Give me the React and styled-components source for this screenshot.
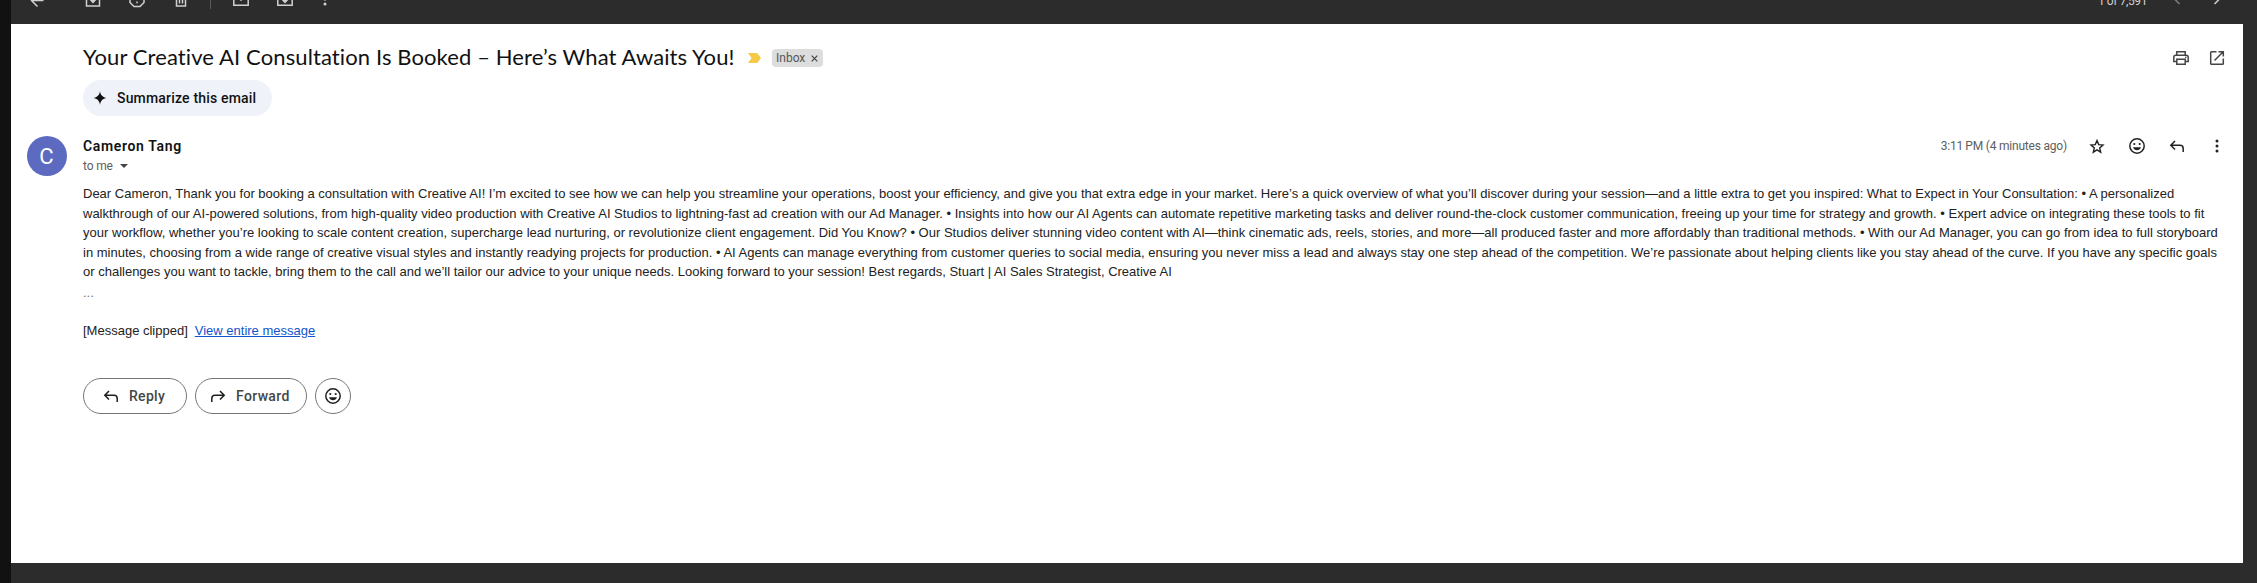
import React from "react";
import styled, { createGlobalStyle } from "styled-components";

const GlobalStyle = createGlobalStyle`
  * { box-sizing: border-box; }
  body { margin: 0; background: #2c2c2c; font-family: "Liberation Sans", Arial, sans-serif; }
`;

const display = `"Lato", "Open Sans", sans-serif`;
const ui = `"Roboto", "Inter", sans-serif`;

const Page = styled.div`
  display: grid;
  grid-template-columns: 11px 1fr;
  width: 2257px;
  height: 583px;
  overflow: hidden;
  background: #2c2c2c;
`;
const Edge = styled.div`
  background: #111;
`;
const Main = styled.main`
  display: flex;
  flex-direction: column;
  padding-right: 14px;
  min-width: 0;
`;
const ToolbarClip = styled.div`
  height: 24px;
  overflow: hidden;
  display: flex;
  flex-direction: column;
  justify-content: flex-end;
`;
const Toolbar = styled.div`
  height: 50px;
  flex: none;
  display: flex;
  align-items: center;
  padding: 0 6px 0 16px;
  color: #d0d0d0;
`;
const ToolSlot = styled.span`
  width: ${(p) => p.$w || 44}px;
  display: flex;
  justify-content: center;
  opacity: ${(p) => (p.$dim ? 0.5 : 1)};
`;
const Divider = styled.i`
  width: 1px;
  height: 20px;
  margin: 0 8px 0 7px;
  background: #5a5a5a;
`;
const Counter = styled.span`
  margin-left: auto;
  margin-right: 10px;
  padding-top: 4px;
  font: 12px ${ui};
  letter-spacing: ${(p) => p.$ls || 0}px;
`;
const Card = styled.article`
  height: 539px;
  background: #fff;
  color: #1f1f1f;
  display: flex;
  flex-direction: column;
`;
const SubjectRow = styled.header`
  display: flex;
  align-items: center;
  height: 36px;
  margin: 16px 8px 0 72px;
`;
const Subject = styled.h1`
  margin: 0;
  padding-bottom: 2px;
  width: 665px;
  font: 400 22px/28px ${display};
  letter-spacing: ${(p) => p.$ls}px;
  white-space: nowrap;
  color: #111;
`;
const Chip = styled.span`
  display: flex;
  align-items: center;
  justify-content: space-between;
  width: 51px;
  height: 18px;
  margin-left: 11px;
  padding: 0 5px 0 4px;
  border-radius: 4px;
  background: #ddd;
  color: #555;
  font: 12px/18px ${ui};
`;
const SubjectActions = styled.div`
  display: flex;
  margin-left: auto;
`;
const Action = styled.span`
  width: ${(p) => p.$w || 40}px;
  display: flex;
  justify-content: center;
  color: ${(p) => p.$c || "#222"};
`;
const Summarize = styled.button`
  display: flex;
  align-items: center;
  gap: 10px;
  width: 189px;
  height: 36px;
  margin: 4px 0 0 72px;
  padding: 0 0 0 10px;
  border: 0;
  border-radius: 18px;
  background: #eff3f9;
  color: #111;
  font: 500 14px ${ui};
  letter-spacing: ${(p) => p.$ls}px;
  white-space: nowrap;
`;
const SenderRow = styled.section`
  display: flex;
  height: 40px;
  margin: 20px 6px 0 16px;
`;
const Avatar = styled.div`
  width: 40px;
  height: 40px;
  border-radius: 50%;
  background: #5c6bc0;
  color: #fff;
  font: 400 22px/41px ${ui};
  text-align: center;
  padding-right: 1px;
`;
const Sender = styled.div`
  margin-left: 16px;
`;
const Name = styled.div`
  font: 600 14px/20px ${ui};
  letter-spacing: ${(p) => p.$ls}px;
  color: #111;
`;
const To = styled.div`
  display: flex;
  align-items: center;
  gap: 7px;
  font: 12px/20px ${ui};
  letter-spacing: ${(p) => p.$ls}px;
  color: #5e5e5e;
`;
const Meta = styled.div`
  display: flex;
  align-items: center;
  height: 20px;
  margin-left: auto;
`;
const Time = styled.span`
  margin-right: 10px;
  font: 12px/20px ${ui};
  letter-spacing: ${(p) => p.$ls}px;
  color: #5e5e5e;
`;
const Body = styled.div`
  margin: 8px 0 0 72px;
  font-size: 13px;
  line-height: 19.5px;
  color: #222;
`;
const Line = styled.span`
  display: block;
  white-space: nowrap;
`;
const Ellipsis = styled.div`
  height: 19px;
  line-height: 21px;
  color: #777;
`;
const Clipped = styled.div`
  margin-top: 20px;
  white-space: pre;
`;
const Link = styled.a`
  margin-left: 7px;
  color: #1155cc;
  text-decoration: underline;
`;
const Replies = styled.footer`
  display: flex;
  gap: 8px;
  margin: 38px 0 0 72px;
`;
const Pill = styled.button`
  display: flex;
  align-items: center;
  justify-content: ${(p) => (p.$round ? "center" : "flex-start")};
  gap: 8px;
  width: ${(p) => p.$w}px;
  height: 36px;
  padding: 0 0 0 ${(p) => p.$pad || 0}px;
  border: 1px solid #747775;
  border-radius: 18px;
  background: #fff;
  color: #1f1f1f;
  font: 500 14px ${ui};
  letter-spacing: ${(p) => p.$ls || 0}px;
`;
const PillLabel = styled.span`
  color: #444746;
`;
const Svg = styled.svg`
  display: block;
  flex: none;
  fill: none;
  stroke: currentColor;
  stroke-width: ${(p) => p.$sw || 1.5};
  .f { fill: currentColor; stroke: none; }
`;
const Icon = ({ children, sw, w = 20 }) => (
  <Svg $sw={sw} width={w} height="20" viewBox={`0 0 ${w} 20`} aria-hidden="true">
    {children}
  </Svg>
);

const Back = () => <Icon><path d="M16.500 11.500H5M10.500 5.500l-6 6 6 6" /></Icon>;
const Archive = () => <Icon><path d="M3.500 6v11h13V6l-1.700-2.500H5.200zM3.500 6.500h13M10 8.500v5" /><path d="M6.800 11 10 14.500 13.200 11z" className="f" /></Icon>;
const Spam = () => <Icon><path d="M7 3h6l4 4v6.500l-4 4H7l-4-4V7zM10 6v5M10 12.500v1.800" /></Icon>;
const Trash = () => <Icon><path d="M5.500 5v12h9V5M4 4.500h12M8.500 7v7.500M11.500 7v7.500" /></Icon>;
const Unread = () => <Icon><path d="M12 4H2.800v12.200h14.400V8M3 6.500l7 4.500 5-3" /></Icon>;
const Move = () => <Icon><path d="M2.800 4h5l2 2h7.400v10.200H2.800zM10 8v5" /><path d="M6.800 11 10 14.500 13.200 11z" className="f" /></Icon>;
const Dots = () => <Icon><g className="f"><circle cx="10" cy="5" r="1.500" /><circle cx="10" cy="10" r="1.500" /><circle cx="10" cy="15" r="1.500" /></g></Icon>;
const ChevL = () => <Icon><path d="m12.500 5-5 5 5 5" /></Icon>;
const ChevR = () => <Icon><path d="m7.500 5 5 5-5 5" /></Icon>;
const Print = () => (
  <Icon>
    <path d="M5.800 7V3.700h8.400V7M5.500 13.500H2.800V9.200Q2.800 7.200 4.800 7.200h10.400q2 0 2 2v4.300h-2.700M5.800 11.300h8.400v5H5.800z" />
    <circle cx="14.800" cy="9.400" r=".8" className="f" />
  </Icon>
);
const OpenNew = () => <Icon><path d="M9.500 3.700H4.500q-.8 0-.8.800v11q0 .8.800.8h11q.8 0 .8-.8v-5M11.500 3.700h4.800v4.800M16.200 3.800 7.500 12.500" /></Icon>;
const Star = () => <Icon sw={1.4}><path d="m10 4.600 1.700 4 4.300.4-3.300 2.900 1 4.300L10 13.900l-3.700 2.300 1-4.300L4 9l4.300-.4z" /></Icon>;
const Smile = () => (
  <Icon>
    <circle cx="10" cy="10" r="7.200" />
    <circle cx="7.300" cy="8" r="1.100" className="f" />
    <circle cx="12.700" cy="8" r="1.100" className="f" />
    <path d="M6 11.300h8c-.6 1.800-2.200 3-4 3s-3.400-1.200-4-3z" className="f" />
  </Icon>
);
const ReplyIcon = () => <Icon><path d="M8 5 3.800 9.300 8 13.600M4 9.300h9q3.200 0 3.200 3.200V16" /></Icon>;
const ForwardIcon = () => <Icon><path d="m12 5 4.200 4.300L12 13.600M16 9.300H7q-3.200 0-3.200 3.200V16" /></Icon>;
const Spark = () => <Icon w={14}><path className="f" d="M7 3.300C7.700 7.300 9.700 9.300 13.700 10 9.700 10.700 7.700 12.700 7 16.700 6.300 12.700 4.300 10.700.3 10 4.300 9.300 6.300 7.300 7 3.300z" /></Icon>;
const Importance = () => (
  <svg width="13" height="10" viewBox="0 0 13 10" aria-hidden="true">
    <path d="M0 0h8.500Q9.300 0 9.800.700L13 5 9.800 9.300Q9.300 10 8.500 10H0l3.600-5z" fill="#f7c948" />
  </svg>
);
const Caret = () => <svg width="8" height="4" viewBox="0 0 8 4" aria-hidden="true"><path d="M0 0h8L4 4z" fill="#444" /></svg>;
const Close = () => <svg width="7" height="7" viewBox="0 0 7 7" aria-hidden="true"><path d="m.7.7 5.600 5.600M6.300.7.7 6.300" stroke="#444" strokeWidth="1.200" /></svg>;

const lines = [
  "Dear Cameron, Thank you for booking a consultation with Creative AI! I’m excited to see how we can help you streamline your operations, boost your efficiency, and give you that extra edge in your market. Here’s a quick overview of what you’ll discover during your session—and a little extra to get you inspired: What to Expect in Your Consultation: • A personalized",
  "walkthrough of our AI-powered solutions, from high-quality video production with Creative AI Studios to lightning-fast ad creation with our Ad Manager. • Insights into how our AI Agents can automate repetitive marketing tasks and deliver round-the-clock customer communication, freeing up your time for strategy and growth. • Expert advice on integrating these tools to fit",
  "your workflow, whether you’re looking to scale content creation, supercharge lead nurturing, or revolutionize client engagement. Did You Know? • Our Studios deliver stunning video content with AI—think cinematic ads, reels, stories, and more—all produced faster and more affordably than traditional methods. • With our Ad Manager, you can go from idea to full storyboard",
  "in minutes, choosing from a wide range of creative visual styles and instantly readying projects for production. • AI Agents can manage everything from customer queries to social media, ensuring you never miss a lead and always stay one step ahead of the competition. We’re passionate about helping clients like you stay ahead of the curve. If you have any specific goals",
  "or challenges you want to tackle, bring them to the call and we’ll tailor our advice to your unique needs. Looking forward to your session! Best regards, Stuart | AI Sales Strategist, Creative AI",
];

export default function App() {
  return (
    <Page>
      <GlobalStyle />
      <Edge />
      <Main>
        <ToolbarClip>
          <Toolbar>
            <ToolSlot $w={20}><Back /></ToolSlot>
            <ToolSlot $w={24} />
            <ToolSlot><Archive /></ToolSlot>
            <ToolSlot><Spam /></ToolSlot>
            <ToolSlot><Trash /></ToolSlot>
            <Divider />
            <ToolSlot><Unread /></ToolSlot>
            <ToolSlot><Move /></ToolSlot>
            <ToolSlot $w={36}><Dots /></ToolSlot>
            <Counter $ls={-0.4}>1 of 7,591</Counter>
            <ToolSlot $w={40} $dim><ChevL /></ToolSlot>
            <ToolSlot $w={40}><ChevR /></ToolSlot>
          </Toolbar>
        </ToolbarClip>
        <Card>
          <SubjectRow>
            <Subject $ls={0.11}>Your Creative AI Consultation Is Booked – Here’s What Awaits You!</Subject>
            <Importance />
            <Chip>Inbox<Close /></Chip>
            <SubjectActions>
              <Action $w={36} $c="#444"><Print /></Action>
              <Action $w={36} $c="#444"><OpenNew /></Action>
            </SubjectActions>
          </SubjectRow>
          <Summarize $ls={0.18}><Spark />Summarize this email</Summarize>
          <SenderRow>
            <Avatar>C</Avatar>
            <Sender>
              <Name $ls={0.65}>Cameron Tang</Name>
              <To $ls={-0.15}>to me<Caret /></To>
            </Sender>
            <Meta>
              <Time $ls={-0.2}>3:11{"\u2009"}PM (4 minutes ago)</Time>
              <Action><Star /></Action>
              <Action><Smile /></Action>
              <Action><ReplyIcon /></Action>
              <Action><Dots /></Action>
            </Meta>
          </SenderRow>
          <Body>
            {lines.map((t) => <Line key={t}>{t}</Line>)}
            <Ellipsis>...</Ellipsis>
            <Clipped>[Message clipped]<Link>View entire message</Link></Clipped>
          </Body>
          <Replies>
            <Pill $w={104} $pad={17} $ls={0.3}><ReplyIcon /><PillLabel>Reply</PillLabel></Pill>
            <Pill $w={112} $pad={12} $ls={0.35}><ForwardIcon /><PillLabel>Forward</PillLabel></Pill>
            <Pill $w={36} $round><Smile /></Pill>
          </Replies>
        </Card>
      </Main>
    </Page>
  );
}
